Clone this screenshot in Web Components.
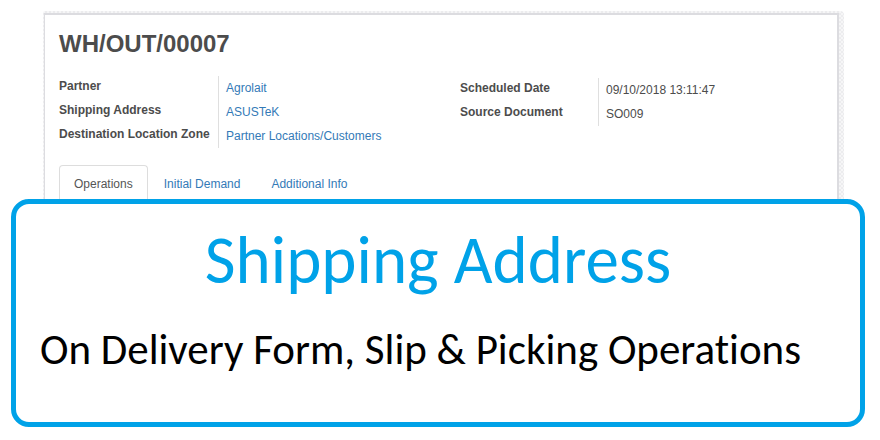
<!DOCTYPE html>
<html lang="en">
<head>
<meta charset="utf-8">
<title>Shipping Address</title>
<style>
  body { margin: 0; background: #fff; font: 12px/24px "Liberation Sans", Arial, sans-serif; color: #4c4c4c; }
</style>
</head>
<body>
<delivery-page>
  <form-sheet heading="WH/OUT/00007">
    <field-group slot="fields">
      <form-field label="Partner"><a href="#partner">Agrolait</a></form-field>
      <form-field label="Shipping Address"><a href="#address">ASUSTeK</a></form-field>
      <form-field label="Destination Location Zone"><a href="#zone">Partner Locations/Customers</a></form-field>
    </field-group>
    <field-group slot="fields" class="schedule">
      <form-field label="Scheduled Date">09/10/2018 13:11:47</form-field>
      <form-field label="Source Document">SO009</form-field>
    </field-group>
    <tab-strip slot="tabs" tabs="Operations|Initial Demand|Additional Info"></tab-strip>
  </form-sheet>
  <feature-callout>
    <span slot="title">Shipping Address</span>
    <span slot="detail">On Delivery Form, Slip &amp; Picking Operations</span>
  </feature-callout>
</delivery-page>
<script>
  class BaseElement extends HTMLElement {
    connectedCallback() {
      if (!this.shadowRoot) this.attachShadow({ mode: "open" }).innerHTML = this.render();
    }
  }

  customElements.define("delivery-page", class extends BaseElement {
    render() {
      return `<style>
        :host { display: flex; flex-direction: column; padding: 11px 15px 13px 11px; }
      </style><slot></slot>`;
    }
  });

  customElements.define("form-sheet", class extends BaseElement {
    render() {
      return `<style>
        :host {
          display: block; margin: 0 21px 0 32px; padding: 2px 5px 0 1px;
          border-radius: 2px 4px 0 0;
          background: repeating-conic-gradient(#ececee 0 25%, #f6f6f7 0 50%) 0 0 / 4px 4px;
        }
        .paper {
          background: #fff; border: solid #dcdce0; border-width: 2px 2px 0 1px;
          padding: 12px 14px 0;
        }
        h1 { margin: 0; font-size: 24px; line-height: 34px; }
        .fields { display: grid; grid-template-columns: 1fr 1fr; margin-top: 15px; }
        .tabs { margin-top: 17px; }
      </style>
      <section class="paper">
        <h1>${this.getAttribute("heading")}</h1>
        <div class="fields"><slot name="fields"></slot></div>
        <div class="tabs"><slot name="tabs"></slot></div>
      </section>`;
    }
  });

  customElements.define("field-group", class extends BaseElement {
    render() {
      return `<style>
        :host { display: block; --label-width: 159px; }
        :host(.schedule) { --label-width: 138px; padding: 2px 0 0 19px; }
      </style><slot></slot>`;
    }
  });

  customElements.define("form-field", class extends BaseElement {
    render() {
      return `<style>
        :host { display: block; }
        dl { display: grid; grid-template-columns: var(--label-width) 1fr; margin: 0; }
        dt { font-weight: bold; line-height: 20px; white-space: nowrap; }
        dd { margin: 0; padding-left: 7px; border-left: 1px solid #dfdfdf; }
        ::slotted(a) { color: #337ab7; text-decoration: none; }
      </style>
      <dl><dt>${this.getAttribute("label")}</dt><dd><slot></slot></dd></dl>`;
    }
  });

  customElements.define("tab-strip", class extends BaseElement {
    render() {
      const tabs = this.getAttribute("tabs").split("|").map((name, i) =>
        `<button type="button" role="tab" aria-selected="${i === 0}">${name}</button>`).join("");
      return `<style>
        :host { display: block; }
        div { display: flex; gap: 1px; }
        button {
          font: inherit; line-height: 36px; color: #337ab7; background: none;
          border: 1px solid transparent; border-bottom: 0; border-radius: 4px 4px 0 0; padding: 0 14px;
        }
        button[aria-selected="true"] { color: #555; background: #fff; border-color: #ddd; }
      </style><div role="tablist">${tabs}</div>`;
    }
  });

  customElements.define("feature-callout", class extends BaseElement {
    render() {
      return `<style>
        :host {
          display: block; position: relative; border: 5px solid #00a2e8; border-radius: 18px;
          background: #fff; margin-top: -3px; padding: 16px 24px 42px;
          font-family: Carlito, Calibri, Lato, "Open Sans", sans-serif;
          font-variant-ligatures: none;
        }
        h2, p { margin: 0; font-weight: normal; white-space: nowrap; }
        h2 { color: #00a2e8; font-size: 67px; line-height: 80px; text-align: center; }
        p { color: #000; font-size: 43px; line-height: 60px; margin-top: 20px; }
      </style>
      <h2><slot name="title"></slot></h2>
      <p><slot name="detail"></slot></p>`;
    }
  });
</script>
</body>
</html>
